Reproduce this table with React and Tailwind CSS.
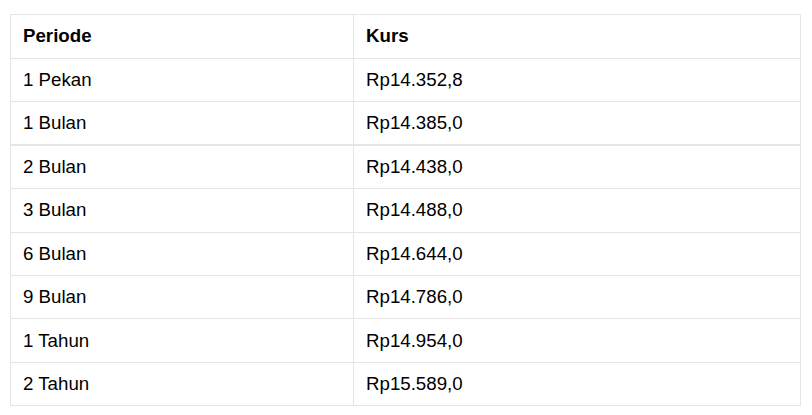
const rows = [
  ["1 Pekan", "Rp14.352,8"],
  ["1 Bulan", "Rp14.385,0"],
  ["2 Bulan", "Rp14.438,0"],
  ["3 Bulan", "Rp14.488,0"],
  ["6 Bulan", "Rp14.644,0"],
  ["9 Bulan", "Rp14.786,0"],
  ["1 Tahun", "Rp14.954,0"],
  ["2 Tahun", "Rp15.589,0"],
];

export default function App() {
  return (
    <div className="min-h-[415px] bg-white pt-[14px] pl-[10px] font-['Liberation_Sans',Arial,sans-serif] text-[18.7px] text-black">
      <table className="w-[791px] border-collapse">
        <thead>
          <tr className="h-[44px]">
            <th className="w-[343px] border border-[#e5e5e5] pl-[12px] text-left font-bold">Periode</th>
            <th className="border border-[#e5e5e5] pl-[12px] text-left font-bold">Kurs</th>
          </tr>
        </thead>
        <tbody>
          {rows.map(([periode, kurs], i) => (
            <tr key={periode} className="h-[43.4px]">
              <td className={i === 2 ? "border border-t-2 border-[#e5e5e5] pl-[12px]" : "border border-[#e5e5e5] pl-[12px]"}>{periode}</td>
              <td className={i === 2 ? "border border-t-2 border-[#e5e5e5] pl-[12px]" : "border border-[#e5e5e5] pl-[12px]"}>{kurs}</td>
            </tr>
          ))}
        </tbody>
      </table>
    </div>
  );
}
